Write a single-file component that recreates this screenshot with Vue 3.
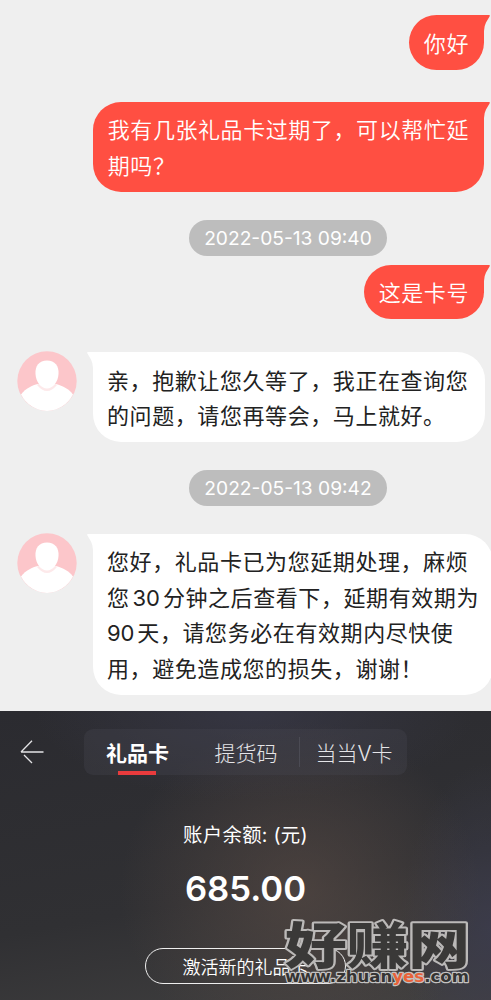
<script setup>
import { ref } from 'vue'

// 聊天记录
const messages = [
  { type: 'mine', lines: ['你好'] },
  { type: 'mine', lines: ['我有几张礼品卡过期了，可以帮忙延', '期吗？'] },
  { type: 'time', text: '2022-05-13 09:40' },
  { type: 'mine', lines: ['这是卡号'] },
  { type: 'service', lines: ['亲，抱歉让您久等了，我正在查询您', '的问题，请您再等会，马上就好。'] },
  { type: 'time', text: '2022-05-13 09:42' },
  {
    type: 'service',
    wide: true,
    lines: [
      '您好，礼品卡已为您延期处理，麻烦',
      '您|30|分钟之后查看下，延期有效期为',
      '|90|天，请您务必在有效期内尽快使',
      '用，避免造成您的损失，谢谢！'
    ]
  }
]

const tabs = ['礼品卡', '提货码', '当当V卡']
const activeTab = ref(0)
const balance = ref('685.00')

/**
 * 按竖线拆分文本，奇数段为数字
 */
const splitLine = (line) => line.split('|')
</script>

<template>
  <div class="page">
    <!-- 聊天区域 -->
    <section class="chat">
      <div v-for="(msg, i) in messages" :key="i" class="row" :class="msg.type">
        <span v-if="msg.type === 'time'" class="time-pill">{{ msg.text }}</span>
        <template v-else>
          <svg v-if="msg.type === 'service'" class="avatar" viewBox="0 0 60 60">
            <circle cx="30" cy="30" r="29.7" fill="#fcc6ca" />
            <path d="M4 43.500C9 37 15 34.500 21 33L39 33C46 35 52 38 56 43.500A30 30 0 0 1 30 60A30 30 0 0 1 4 43.500Z" fill="#fff" />
            <path d="M20 34Q30 46 40 34L37 32H23Z" fill="#fde9ea" />
            <path d="M30 9.500C38 9.500 42 15 41.500 23C41 31 36 37.500 30 37.500C24 37.500 19 31 18.500 23C18 15 22 9.500 30 9.500Z" fill="#fff" />
          </svg>
          <div class="bubble" :class="{ wide: msg.wide }">
            <svg class="tail" viewBox="0 0 10 28">
              <path d="M0 0H8Q9.300 0 8.700 1.200L5 7.500Q3.300 10.500 3 16V28H0Z" />
            </svg>
            <p v-for="line in msg.lines" :key="line">
              <span v-for="(part, n) in splitLine(line)" :key="n" :class="{ num: n % 2, first: line[0] === '|' }">{{ part }}</span>
            </p>
          </div>
        </template>
      </div>
    </section>

    <!-- 礼品卡余额区域 -->
    <section class="card-panel">
      <header class="panel-header">
        <svg class="back" viewBox="0 0 24 24">
          <path d="M23.500 12H1M12 .8L1 12M4 15L12 23" />
        </svg>
        <nav class="tabs">
          <button
            v-for="(tab, i) in tabs"
            :key="tab"
            class="tab"
            :class="{ active: activeTab === i }"
            @click="activeTab = i"
          >
            {{ tab }}
          </button>
        </nav>
      </header>
      <div class="label">账户余额: (元)</div>
      <div class="balance">{{ balance }}</div>
      <button class="activate-btn">激活新的礼品卡</button>

      <!-- 水印 -->
      <svg class="watermark" viewBox="0 0 196 70">
        <text class="mark-name" x="5" y="45" textLength="185" lengthAdjust="spacingAndGlyphs">好赚网</text>
        <text class="mark-url" x="5" y="62.500" textLength="184" lengthAdjust="spacingAndGlyphs">www.zhuan<tspan class="yes">yes</tspan>.com</text>
      </svg>
    </section>
  </div>
</template>

<style>
body {
  background: #efefef;
}
</style>

<style scoped>
.page {
  width: 491px;
  height: 1000px;
  overflow: hidden;
  background: #efefef;
  font-family: Inter, "Noto Sans CJK SC", sans-serif;
  display: flex;
  flex-direction: column;
}

.chat {
  height: 711px;
  box-sizing: border-box;
  padding-top: 15px;
  flex-shrink: 0;
}

.row {
  display: flex;
}

.row.mine {
  justify-content: flex-end;
  padding-right: 7px;
  margin-bottom: 32px;
}

.row.mine:nth-child(2) {
  margin-bottom: 28px;
}

.row.time {
  padding-left: 189px;
}

.time-pill {
  width: 198px;
  height: 36px;
  margin-bottom: 9px;
  box-sizing: border-box;
  border-radius: 18px;
  background: #bdbdbd;
  color: #fff;
  font-size: 19.2px;
  line-height: 37px;
  text-align: center;
  white-space: nowrap;
}

.row.service {
  padding-left: 17px;
  align-items: flex-start;
  margin-bottom: 28px;
}

.row.mine + .service {
  padding-top: 0.6px;
}

.service + .time .time-pill {
  margin-bottom: 27.5px;
}

.avatar {
  width: 60px;
  height: 60px;
  margin: -1px 16px 0 0;
  flex-shrink: 0;
}

.bubble {
  position: relative;
  box-sizing: border-box;
  padding: 11.7px 15px 7.3px;
  border-radius: 28px;
  color: #222;
  background: #fff;
  font-size: 22px;
  letter-spacing: 0.58px;
  line-height: 35.6px;
}

.bubble p {
  margin: 0;
  white-space: nowrap;
}

.mine .bubble {
  background: #ff4f42;
  color: #fff;
  border-top-right-radius: 0;
  font-weight: 350;
}

.service .bubble {
  width: 392px;
  padding-left: 14px;
  border-top-left-radius: 0;
}

.service .bubble.wide {
  width: 400px;
}

.num {
  margin: 0 3px 0 3px;
  font-size: 22px;
  letter-spacing: -0.1px;
}

.num.first {
  margin-left: 0;
}

.tail {
  position: absolute;
  top: 0;
  right: -7px;
  width: 10px;
  height: 28px;
  fill: #ff4f42;
}

.service .tail {
  right: auto;
  left: -7px;
  transform: scaleX(-1);
  fill: #fff;
}

.card-panel {
  position: relative;
  flex: 1;
  display: flex;
  flex-direction: column;
  align-items: center;
  color: #fff;
  background:
    radial-gradient(ellipse 180px 170px at 300px 180px, rgba(92, 77, 70, 0.6), rgba(92, 77, 70, 0) 100%),
    radial-gradient(ellipse 220px 90px at 255px 0, rgba(60, 60, 78, 0.6), rgba(60, 60, 78, 0) 100%),
    radial-gradient(ellipse 90px 170px at 491px 220px, rgba(60, 60, 78, 0.8), rgba(60, 60, 78, 0) 100%),
    linear-gradient(170deg, #2b2b30 0%, #303033 60%, #414040 100%);
}

.panel-header {
  align-self: stretch;
  display: flex;
  align-items: center;
  padding: 18px 0 0 20px;
}

.back {
  width: 24px;
  height: 24px;
  margin: -1px 40px 0 0;
  fill: none;
  stroke: #e4e4e6;
  stroke-width: 1.3;
}

.tabs {
  display: flex;
  width: 323px;
  height: 46px;
  border-radius: 9px;
  background: rgba(74, 74, 84, 0.3);
}

.tab {
  position: relative;
  width: 107px;
  padding: 4px 0 0 3px;
  border: none;
  background: none;
  color: #e5e5e8;
  font-family: inherit;
  font-size: 21px;
  font-weight: 300;
  line-height: 42px;
  white-space: nowrap;
}

.tab:last-child {
  padding-left: 5px;
}

.tab.active {
  padding-left: 0;
  color: #fff;
  font-weight: 700;
}

.tab:nth-child(2)::after {
  content: '';
  position: absolute;
  right: -2px;
  top: 8px;
  width: 1px;
  height: 30px;
  background: #4b4b54;
}

.tab.active::before {
  content: '';
  position: absolute;
  left: 34px;
  bottom: 0;
  width: 38px;
  height: 4px;
  background: #e93b3d;
}

.label {
  margin-top: 46px;
  font-size: 19.4px;
  letter-spacing: 0.3px;
  line-height: 28px;
}

.balance {
  margin-top: 17px;
  font-size: 34.7px;
  font-weight: 600;
  line-height: 44px;
}

.activate-btn {
  width: 201px;
  height: 36px;
  margin-top: 38px;
  padding: 0;
  border: 1.5px solid #eee;
  border-radius: 18px;
  background: transparent;
  color: #fff;
  font-family: inherit;
  font-size: 18px;
  font-weight: 350;
}

.watermark {
  position: absolute;
  left: 280px;
  top: 208px;
  width: 196px;
  height: 70px;
  overflow: visible;
}

.mark-name {
  font-family: "Noto Sans CJK SC", sans-serif;
  font-size: 50px;
  font-weight: 900;
  fill: #3a3938;
  stroke: #bbb9b8;
  stroke-width: 3.8;
  stroke-linejoin: round;
  paint-order: stroke;
}

.mark-url {
  font-family: "DejaVu Sans", sans-serif;
  font-size: 16px;
  font-weight: 700;
  fill: #353433;
  stroke: #c4c2c1;
  stroke-width: 2.4;
  stroke-linejoin: round;
  paint-order: stroke;
}

.yes {
  fill: #e8623a;
}
</style>
